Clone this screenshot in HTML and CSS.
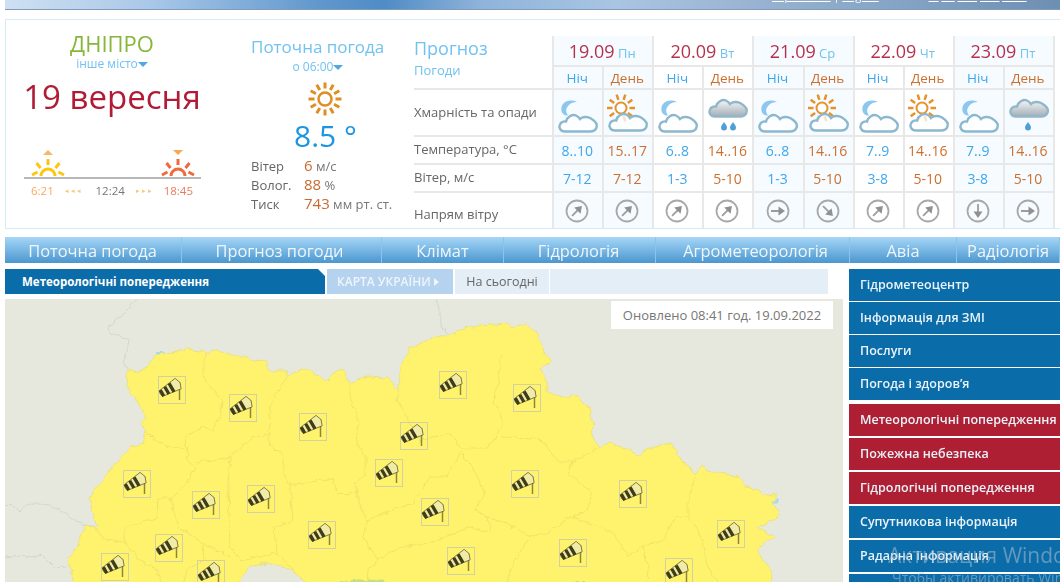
FILE: index.html
```html
<!DOCTYPE html>
<html lang="uk">
<head>
    <meta charset="UTF-8">
    <meta name="viewport" content="width=device-width, initial-scale=1.0">
    <title>Погода</title>
    <link rel="stylesheet" href="styles.css">
</head>
<body>
    <svg class="defs" width="0" height="0">
        <defs>
            <linearGradient id="rainFill" x1="0" y1="0" x2="0" y2="1">
                <stop offset="0" stop-color="#f4f6f7"/>
                <stop offset="1" stop-color="#a3aeb6"/>
            </linearGradient>
            <filter id="rough" x="0" y="0" width="100%" height="100%" color-interpolation-filters="sRGB">
                <feTurbulence type="fractalNoise" baseFrequency="0.14" numOctaves="2" seed="4"/>
                <feDisplacementMap in="SourceGraphic" scale="6" xChannelSelector="R" yChannelSelector="G"/>
            </filter>
            <path id="cloudShape" d="M12 41.5C7 41.5 5.500 37 7 34.500C8 32 11 31 13 31.500C14 27 19 24 23 25.500C25 26.500 26 27.500 27 29C29 27 34 26 38 28.500C42 31 45 34 43.500 37.500C42.500 40.500 39 41.500 37 41.500Z"/>
            <g id="sunRays" class="rays">
                <line x1="-14" x2="14" y1="0" y2="0"/>
                <line x1="-14" x2="14" y1="0" y2="0" transform="rotate(36)"/>
                <line x1="-14" x2="14" y1="0" y2="0" transform="rotate(72)"/>
                <line x1="-14" x2="14" y1="0" y2="0" transform="rotate(108)"/>
                <line x1="-14" x2="14" y1="0" y2="0" transform="rotate(144)"/>
            </g>
            <symbol id="moonCloud" viewBox="0 0 50 45">
                <path class="moon" d="M24 12C15 8 7 13 8.500 21C9 24 12 26 15 25.500C12.500 22 12.500 19 15 16C17 13.500 20 12 24 12Z"/>
                <use href="#cloudShape" class="cloud"/>
            </symbol>
            <symbol id="sunCloud" viewBox="0 0 50 45">
                <g transform="translate(18 18)">
                    <use href="#sunRays"/>
                    <circle class="sun-core" r="5.500"/>
                </g>
                <use href="#cloudShape" class="cloud" transform="translate(0 -1)"/>
            </symbol>
            <symbol id="rainTwo" viewBox="0 0 50 45">
                <use href="#cloudShape" class="rain-cloud" transform="translate(0 -15)"/>
                <path class="drop" d="M21 32c2 3 3 4 3 5.500a3 3 0 0 1-6 0c0-1.500 1-2.500 3-5.500Z"/>
                <path class="drop" d="M30 32c2 3 3 4 3 5.500a3 3 0 0 1-6 0c0-1.500 1-2.500 3-5.500Z"/>
            </symbol>
            <symbol id="rainOne" viewBox="0 0 50 45">
                <use href="#cloudShape" class="rain-cloud" transform="translate(0 -15)"/>
                <path class="drop" d="M24 32c2 3 3 4 3 5.500a3 3 0 0 1-6 0c0-1.500 1-2.500 3-5.500Z"/>
            </symbol>
            <symbol id="windDir" viewBox="0 0 26 26">
                <circle class="dir-ring" cx="13" cy="13" r="10.500"/>
                <path class="dir-shaft" d="M13 20V10"/>
                <path class="dir-head" d="M8.500 12.500 13 6l4.500 6.500Z"/>
            </symbol>
            <g id="windPin">
                <rect class="pin-box" x="0.500" y="0.500" width="27" height="27"/>
                <line class="pin-pole" x1="21.500" y1="6" x2="21.500" y2="24"/>
                <g transform="translate(12.500 12) rotate(-30) scale(1.100)">
                    <path class="sock-light" d="M-10 -3Q-11.500 0 -10 3L8 5.500 10 0 8 -5.500Z"/>
                    <path class="sock-dark" d="M-10.500 -3H-7.500V3.300H-10.500ZM-5.500 -3.600H-2.500V4H-5.500ZM-0.500 -4.300H2.500V4.700H-0.500Z"/>
                </g>
            </g>
        </defs>
    </svg>

    <div class="page">
        <div class="banner">
            <div class="langs"><a>Українська</a> <span>|</span> <a>English</a></div>
            <div class="top-tools"><a>__</a><a>ХА</a><a>____</a><a>____</a><a>_____</a></div>
        </div>

        <div class="panel">
            <div class="city-col">
                <div class="city-name">ДНІПРО</div>
                <div class="city-other">інше місто<i class="caret"></i></div>
                <div class="today">19 вересня</div>
                <div class="sun-line">
                    <div class="sun-mark">
                        <i class="tri-up"></i>
                        <svg width="36" height="20" viewBox="0 0 36 20">
                            <g class="rise-sun">
                                <path d="M11 19a7 7 0 0 1 14 0"/>
                                <path d="M18 8V2M10.500 11 6.500 6M25.500 11 29.500 6M7.500 15 2 18M28.500 15 34 18"/>
                            </g>
                        </svg>
                    </div>
                    <div class="sun-mark">
                        <i class="tri-down"></i>
                        <svg width="36" height="20" viewBox="0 0 36 20">
                            <g class="set-sun">
                                <path d="M11 19a7 7 0 0 1 14 0"/>
                                <path d="M18 8V2M10.500 11 6.500 6M25.500 11 29.500 6M7.500 15 2 18M28.500 15 34 18"/>
                            </g>
                        </svg>
                    </div>
                </div>
                <div class="sun-times">
                    <span class="t-rise">6:21</span>
                    <span class="t-arrows">◂ ◂ ◂</span>
                    <span class="t-noon">12:24</span>
                    <span class="t-arrows">▸ ▸ ▸</span>
                    <span class="t-set">18:45</span>
                </div>
            </div>

            <div class="now-col">
                <div class="now-title">Поточна погода</div>
                <div class="now-time">о 06:00<i class="caret"></i></div>
                <svg class="now-icon" width="36" height="36" viewBox="-18 -18 36 36">
                    <g class="big-rays">
                        <line x1="-16.500" x2="16.500" y1="0" y2="0"/>
                        <line x1="-16.500" x2="16.500" y1="0" y2="0" transform="rotate(30)"/>
                        <line x1="-16.500" x2="16.500" y1="0" y2="0" transform="rotate(60)"/>
                        <line x1="-16.500" x2="16.500" y1="0" y2="0" transform="rotate(90)"/>
                        <line x1="-16.500" x2="16.500" y1="0" y2="0" transform="rotate(120)"/>
                        <line x1="-16.500" x2="16.500" y1="0" y2="0" transform="rotate(150)"/>
                    </g>
                    <circle class="sun-core big" r="6.500"/>
                </svg>
                <div class="now-temp">8.5 °</div>
                <div class="now-row"><span class="now-label">Вітер</span><span class="now-val">6</span> м/с</div>
                <div class="now-row"><span class="now-label">Волог.</span><span class="now-val">88</span> %</div>
                <div class="now-row"><span class="now-label">Тиск</span><span class="now-val">743</span> мм рт. ст.</div>
            </div>

            <table class="forecast">
                <colgroup>
                    <col class="col-label">
                    <col class="pale"><col class="pale">
                    <col class="plain"><col class="plain">
                    <col class="pale"><col class="pale">
                    <col class="plain"><col class="plain">
                    <col class="pale"><col class="pale">
                </colgroup>
                <tr class="row-date">
                    <th class="no-line fc-title"><div class="fc-big">Прогноз</div><div class="fc-small">Погоди</div></th>
                    <td colspan="2"><b>19.09</b> <span>Пн</span></td>
                    <td colspan="2"><b>20.09</b> <span>Вт</span></td>
                    <td colspan="2"><b>21.09</b> <span>Ср</span></td>
                    <td colspan="2"><b>22.09</b> <span>Чт</span></td>
                    <td colspan="2"><b>23.09</b> <span>Пт</span></td>
                </tr>
                <tr class="row-part">
                    <th class="no-line"></th>
                    <td class="night">Ніч</td><td class="day">День</td>
                    <td class="night">Ніч</td><td class="day">День</td>
                    <td class="night">Ніч</td><td class="day">День</td>
                    <td class="night">Ніч</td><td class="day">День</td>
                    <td class="night">Ніч</td><td class="day">День</td>
                </tr>
                <tr class="row-icon">
                    <th>Хмарність та опади</th>
                    <td><svg class="wx"><use href="#moonCloud"/></svg></td>
                    <td><svg class="wx"><use href="#sunCloud"/></svg></td>
                    <td><svg class="wx"><use href="#moonCloud"/></svg></td>
                    <td><svg class="wx"><use href="#rainTwo"/></svg></td>
                    <td><svg class="wx"><use href="#moonCloud"/></svg></td>
                    <td><svg class="wx"><use href="#sunCloud"/></svg></td>
                    <td><svg class="wx"><use href="#moonCloud"/></svg></td>
                    <td><svg class="wx"><use href="#sunCloud"/></svg></td>
                    <td><svg class="wx"><use href="#moonCloud"/></svg></td>
                    <td><svg class="wx"><use href="#rainOne"/></svg></td>
                </tr>
                <tr class="row-num">
                    <th>Температура, °C</th>
                    <td class="night">8..10</td><td class="day">15..17</td>
                    <td class="night">6..8</td><td class="day">14..16</td>
                    <td class="night">6..8</td><td class="day">14..16</td>
                    <td class="night">7..9</td><td class="day">14..16</td>
                    <td class="night">7..9</td><td class="day">14..16</td>
                </tr>
                <tr class="row-num">
                    <th>Вітер, м/с</th>
                    <td class="night">7-12</td><td class="day">7-12</td>
                    <td class="night">1-3</td><td class="day">5-10</td>
                    <td class="night">1-3</td><td class="day">5-10</td>
                    <td class="night">3-8</td><td class="day">5-10</td>
                    <td class="night">3-8</td><td class="day">5-10</td>
                </tr>
                <tr class="row-dir">
                    <th>Напрям вітру</th>
                    <td><svg class="dir ne"><use href="#windDir"/></svg></td>
                    <td><svg class="dir ne"><use href="#windDir"/></svg></td>
                    <td><svg class="dir ne"><use href="#windDir"/></svg></td>
                    <td><svg class="dir ne"><use href="#windDir"/></svg></td>
                    <td><svg class="dir e"><use href="#windDir"/></svg></td>
                    <td><svg class="dir se"><use href="#windDir"/></svg></td>
                    <td><svg class="dir ne"><use href="#windDir"/></svg></td>
                    <td><svg class="dir ne"><use href="#windDir"/></svg></td>
                    <td><svg class="dir s"><use href="#windDir"/></svg></td>
                    <td><svg class="dir e"><use href="#windDir"/></svg></td>
                </tr>
            </table>
        </div>

        <div class="nav">
            <a class="n1">Поточна погода</a>
            <a class="n2">Прогноз погоди</a>
            <a class="n3">Клімат</a>
            <a class="n4">Гідрологія</a>
            <a class="n5">Агрометеорологія</a>
            <a class="n6">Авіа</a>
            <a class="n7">Радіологія</a>
        </div>

        <div class="main">
            <div class="content">
                <div class="subtabs">
                    <div class="tab-title">Метеорологічні попередження</div>
                    <div class="tab-map">КАРТА УКРАЇНИ<i class="tab-arrow"></i></div>
                    <div class="tab-today">На сьогодні</div>
                    <div class="tab-rest"></div>
                </div>
                <div class="map">
                    <div class="updated">Оновлено 08:41 год. 19.09.2022</div>
                    <svg class="map-svg" width="838" height="283" viewBox="5 299 838 283">
                        <g class="border-grey" filter="url(#rough)">
                            <polyline points="137,299 129,308 109,327 111,333 129,340 128,345 123,363 128,370"/>
                            <polyline points="437,299 441,312 441,327 454,337"/>
                            <polyline points="5,505 13,506 20,512 30,503 50,505 60,510 70,518 80,523 93,527"/>
                            <polyline points="5,557 22,555 32,557 42,555 55,568 68,567"/>
                        </g>
                        <g filter="url(#rough)">
                            <polygon class="ukraine" points="128,370 138,372 146,368 155,355 172,352 187,349 207,352 213,350 237,355 255,361 267,362 269,371 287,371 288,376 293,372 307,368 313,373 328,380 333,373 343,369 350,383 367,377 388,378 398,391 400,376 402,363 411,348 432,338 450,334 471,327 490,325 503,323 511,327 525,323 538,335 545,353 552,362 540,368 547,380 547,392 563,397 578,395 582,403 590,407 593,427 592,437 600,447 610,443 623,446 638,455 647,449 672,443 678,455 695,475 702,465 707,471 720,473 740,478 745,485 758,490 763,496 778,493 773,503 779,513 778,517 758,528 775,537 763,543 758,553 772,572 770,590 313,590 293,570 267,563 248,567 232,590 77,590 68,560 77,547 85,526 97,528 89,498 115,463 132,447 143,443 146,432 140,420 146,418 140,407 127,387"/>
                            <path class="water" d="M157 352h7l-3 2h-4ZM777 497l2 3-1 4-3 1-1-3Z"/>
                            <path class="green" d="M338 590l2-9 9 1 4-2 14 1 12-2 6 2 9 9ZM570 590l5-8 9 0 7 8Z"/>
                            <g class="border-yellow">
                                <polyline points="207,352 203,364 203,377 212,388 222,400 220,418 213,430 203,427 195,431 185,438 188,460 195,468 183,487 170,498 178,527 203,543 230,557"/>
                                <polyline points="146,432 158,442 170,447 185,448"/>
                                <polyline points="287,377 278,390 270,407 269,443 283,457 283,473 290,485 333,478 338,495 357,492"/>
                                <polyline points="269,435 253,438 240,448 230,457 213,460 197,462"/>
                                <polyline points="230,457 228,487 230,547 240,560 277,553 275,527 293,520 290,485"/>
                                <polyline points="170,498 158,498 157,518 125,527 125,543 140,560 157,570 163,590"/>
                                <polyline points="97,528 103,540 125,542"/>
                                <polyline points="203,543 204,560 187,570 182,590"/>
                                <polyline points="350,383 350,397 358,417 357,445 365,455 365,473 355,485 360,507 367,520 363,537 378,560 368,570 367,590"/>
                                <polyline points="367,520 393,510 413,503 430,477 447,477 462,450 450,433 430,438 420,442 410,423 397,400 398,391"/>
                                <polyline points="277,553 293,570"/>
                                <polyline points="378,560 400,547 430,543 470,527 490,532 488,518"/>
                                <polyline points="502,353 498,383 493,403 502,415 502,427 487,448 462,448"/>
                                <polyline points="502,437 533,438 543,442 558,462 572,462 600,448"/>
                                <polyline points="462,455 472,465 485,493 475,510 488,518 507,523 530,537 548,532 563,522 573,517 587,510 592,493 568,472 572,462"/>
                                <polyline points="573,517 613,532 627,557 643,547 663,540 675,518 688,517 688,500 695,477"/>
                                <polyline points="688,517 703,540 707,567 723,590"/>
                                <polyline points="643,547 648,567 647,590"/>
                                <polyline points="530,537 515,560 503,590"/>
                            </g>
                        </g>
                        <use href="#windPin" x="158" y="376"/>
                        <use href="#windPin" x="229" y="394"/>
                        <use href="#windPin" x="299" y="413"/>
                        <use href="#windPin" x="400" y="422"/>
                        <use href="#windPin" x="375" y="459"/>
                        <use href="#windPin" x="123" y="470"/>
                        <use href="#windPin" x="192" y="491"/>
                        <use href="#windPin" x="247" y="485"/>
                        <use href="#windPin" x="308" y="521"/>
                        <use href="#windPin" x="155" y="534"/>
                        <use href="#windPin" x="101" y="553"/>
                        <use href="#windPin" x="197" y="560"/>
                        <use href="#windPin" x="439" y="371"/>
                        <use href="#windPin" x="513" y="384"/>
                        <use href="#windPin" x="511" y="470"/>
                        <use href="#windPin" x="619" y="480"/>
                        <use href="#windPin" x="717" y="520"/>
                        <use href="#windPin" x="421" y="498"/>
                        <use href="#windPin" x="447" y="547"/>
                        <use href="#windPin" x="559" y="539"/>
                        <use href="#windPin" x="665" y="558"/>
                    </svg>
                </div>
            </div>

            <div class="side">
                <div class="side-group">
                    <a>Гідрометеоцентр</a>
                    <a>Інформація для ЗМІ</a>
                    <a>Послуги</a>
                    <a>Погода і здоров’я</a>
                </div>
                <div class="side-group red">
                    <a>Метеорологічні попередження</a>
                    <a>Пожежна небезпека</a>
                    <a>Гідрологічні попередження</a>
                </div>
                <div class="side-group lower">
                    <a>Супутникова інформація</a>
                    <a>Радарна інформація</a>
                    <a></a>
                </div>
            </div>
        </div>
    </div>

    <div class="watermark">
        <div class="wm-big">Активация Windows</div>
        <div class="wm-small">Чтобы активировать Windows</div>
    </div>
</body>
</html>
```

FILE: styles.css
```css
html, body {
    margin: 0;
    height: 100%;
    overflow: hidden;
    background: white;
}

body {
    font-family: "Open Sans", "Noto Sans", sans-serif;
    color: #666;
    position: relative;
}

.defs {
    position: absolute;
}

.page {
    width: 1100px;
    margin-left: 5px;
    filter: blur(0.55px);
}

/* top banner, cut by the window */
.banner {
    width: 1055px;
    height: 10px;
    box-sizing: border-box;
    border-bottom: 1px solid #7f9cba;
    background: linear-gradient(90deg, #cfe0f2 0%, #a9c7e8 14%, #5f97cd 30%, #4f8cc6 36%, #8fb3da 45%, #a9c5e2 58%, #9db7d4 68%, #85a3c4 85%, #6d8fb2 100%);
    display: flex;
    overflow: hidden;
}

.langs {
    margin: -12px 0 0 767px;
    font-size: 11px;
    color: white;
    line-height: 16px;
    white-space: nowrap;
}

.langs a {
    text-decoration: underline;
}

.top-tools {
    margin: -12px 0 0 50px;
    font-size: 11px;
    line-height: 16px;
    color: white;
    display: flex;
    gap: 3px;
}

.top-tools a {
    text-decoration: underline;
}

/* weather panel */
.panel {
    margin-top: 9px;
    height: 210px;
    box-sizing: border-box;
    border: 1px solid #d4ecfa;
    border-right: none;
    display: flex;
}

.city-col {
    width: 212px;
    flex: none;
    padding-top: 10px;
    text-align: center;
}

.city-name {
    font-size: 22px;
    line-height: 26px;
    color: #86b73a;
}

.city-other {
    font-size: 12px;
    line-height: 15px;
    color: #71c2f0;
}

.caret {
    display: inline-block;
    border: 5px solid transparent;
    border-top: 5px solid #4fa9de;
    border-bottom: none;
    vertical-align: middle;
}

.today {
    font-size: 33px;
    line-height: 44px;
    margin-top: 4px;
    color: #b01c36;
}

.sun-line {
    margin: 31px 0 0 18px;
    width: 177px;
    box-sizing: border-box;
    border-bottom: 2px solid #b8b8b8;
    display: flex;
    justify-content: space-between;
    padding: 0 5px 0 6px;
}

.sun-mark {
    width: 36px;
    display: flex;
    flex-direction: column;
    align-items: center;
    gap: 2px;
}

.sun-mark svg {
    display: block;
}

.tri-up {
    border: 5px solid transparent;
    border-top: none;
    border-bottom: 5px solid #f7b56a;
}

.tri-down {
    border: 5px solid transparent;
    border-bottom: none;
    border-top: 5px solid #f7a94e;
}

.rise-sun path, .set-sun path {
    fill: none;
    stroke-width: 3;
}

.rise-sun path {
    stroke: #ffc611;
}

.set-sun path {
    stroke: #ef6a3c;
}

.sun-times {
    margin: 3px 0 0 18px;
    width: 177px;
    display: flex;
    justify-content: space-between;
    padding: 0 8px 0 7px;
    box-sizing: border-box;
    font-size: 11.5px;
    line-height: 17px;
}

.t-rise {
    color: #f9a95a;
}

.t-noon {
    color: #777;
    margin-left: 3px;
}

.t-set {
    color: #f0795a;
}

.t-arrows {
    font-size: 7px;
    color: #f9c77f;
}

.now-col {
    width: 163px;
    flex: none;
    margin-left: 33px;
    padding-top: 15px;
}

.now-title {
    font-size: 17px;
    line-height: 24px;
    color: #71c2f0;
    white-space: nowrap;
}

.now-time {
    font-size: 12px;
    line-height: 16px;
    color: #71c2f0;
    text-align: center;
    width: 134px;
}

.now-icon {
    display: block;
    margin: 6px 0 0 56px;
}

.big-rays line {
    stroke: #de8f24;
    stroke-width: 3;
    stroke-dasharray: 6 21 6;
}

.now-temp {
    font-size: 30px;
    line-height: 38px;
    color: #1c96e0;
    margin-left: 43px;
    margin-bottom: 2px;
    white-space: nowrap;
}

.now-row {
    height: 19px;
    font-size: 13px;
    line-height: 19px;
    color: #777;
    white-space: nowrap;
}

.now-label {
    display: inline-block;
    width: 53px;
    color: #666;
    font-size: 13px;
}

.now-val {
    color: #c96a32;
    font-size: 15px;
    line-height: 1;
}

/* forecast table */
.forecast {
    margin: 16px 0 0 0;
    width: 641px;
    height: 191px;
    flex: none;
    table-layout: fixed;
    border-collapse: collapse;
    font-size: 13.5px;
}

.col-label {
    width: 139px;
}

.forecast col.pale, .forecast col.plain {
    width: 50px;
}

.forecast col.pale {
    background: #f6fbff;
}

.forecast th {
    text-align: left;
    font-weight: normal;
    color: #666;
    font-size: 13px;
    padding: 0 0 2px;
    border-top: 2px solid #e8e8e8;
    white-space: nowrap;
    background: white;
}

.forecast th.no-line {
    border-top: none;
}

.forecast td {
    border: 2px solid #e8e8e8;
    text-align: center;
    padding: 0 2px 0 0;
    white-space: nowrap;
}

.row-date {
    height: 30px;
}

.forecast .row-date td {
    border-top: none;
    color: #71c2f0;
    font-size: 13px;
}

.row-date b {
    font-weight: normal;
    font-size: 18px;
    color: #b5314f;
}

.fc-title {
    vertical-align: top;
}

.fc-big {
    font-size: 18px;
    line-height: 26px;
    color: #71c2f0;
    margin-top: -1px;
}

.fc-small {
    font-size: 13px;
    line-height: 15px;
    color: #71c2f0;
    margin-top: 2px;
    position: relative;
    margin-bottom: -30px;
}

.row-part {
    height: 23px;
    font-size: 13.5px;
}

.row-icon {
    height: 46px;
}

.row-num {
    height: 28px;
    font-size: 14px;
}

.row-dir {
    height: 36px;
}

.forecast .row-dir td {
    border-bottom: none;
}

.forecast .row-dir th {
    padding-top: 8px;
}

.night {
    color: #3ea6ec;
}

.day {
    color: #cd6f2c;
}

.wx {
    display: block;
    width: 50px;
    height: 45px;
    margin: 0 -1px;
}

.cloud {
    fill: white;
    fill-opacity: 0.75;
    stroke: #8cb8cf;
    stroke-width: 2.4;
}

.moon {
    fill: #8dc7ef;
}

.rays line {
    stroke: #e6922a;
    stroke-width: 2.5;
    stroke-dasharray: 5.500 17 5.500;
}

.sun-core {
    fill: white;
    stroke: #e6922a;
    stroke-width: 2;
}

.sun-core.big {
    stroke: #de8f24;
    stroke-width: 2.5;
}

.rain-cloud {
    fill: url(#rainFill);
    stroke: #93b7ca;
    stroke-width: 2.4;
}

.drop {
    fill: #4e9fd6;
}

.dir {
    display: block;
    width: 26px;
    height: 26px;
    margin: 0 auto;
}

.dir.ne { transform: rotate(45deg); }
.dir.e { transform: rotate(90deg); }
.dir.se { transform: rotate(135deg); }
.dir.s { transform: rotate(180deg); }

.dir-ring {
    fill: none;
    stroke: #a8a8a8;
    stroke-width: 1.800;
}

.dir-shaft {
    fill: none;
    stroke: #9c9c9c;
    stroke-width: 1.800;
}

.dir-head {
    fill: #909090;
}

/* main menu */
.nav {
    margin-top: 8px;
    height: 26px;
    display: flex;
    background: linear-gradient(#a6d6f7, #4b97cf);
}

.nav a {
    box-sizing: border-box;
    flex: none;
    border-right: 1px solid #8cc3ea;
    color: #eef6fc;
    font-size: 16.4px;
    line-height: 28px;
    text-align: center;
    white-space: nowrap;
}

.n1 { width: 177px; padding-right: 1px; }
.n2 { width: 200px; padding-right: 4px; }
.n3 { width: 122px; }
.n4 { width: 152px; padding-right: 2px; }
.n5 { width: 194px; padding-left: 6px; }
.n6 { width: 107px; }
.n7 { width: 103px; border-right: none; }

.main {
    margin-top: 6px;
    display: flex;
}

.content {
    width: 838px;
    flex: none;
}

.subtabs {
    height: 25px;
    width: 823px;
    display: flex;
    gap: 2px;
    font-size: 12.5px;
    line-height: 25px;
}

.tab-title {
    width: 320px;
    box-sizing: border-box;
    padding-left: 17px;
    background: #0a6ca8;
    color: white;
    font-weight: 700;
    font-size: 11.5px;
    clip-path: polygon(0 0, 313px 0, 100% 7px, 100% 100%, 0 100%);
}

.tab-map {
    width: 126px;
    box-sizing: border-box;
    padding-left: 10px;
    background: #b5d2ee;
    color: #eef5fb;
    font-size: 12px;
    font-weight: 600;
    white-space: nowrap;
}

.tab-arrow {
    display: inline-block;
    margin-left: 3px;
    border: 4px solid transparent;
    border-left: 5px solid #eef5fb;
    border-right: none;
}

.tab-today {
    width: 94px;
    box-sizing: border-box;
    text-align: center;
    background: #e4eef7;
    color: #666;
}

.tab-rest {
    flex: 1;
    margin-left: -1px;
    background: #e4eef7;
}

.map {
    position: relative;
    margin-top: 5px;
    height: 283px;
    background: #e6e8de;
    overflow: hidden;
}

.map-svg {
    display: block;
}

.updated {
    position: absolute;
    top: 2px;
    left: 606px;
    width: 222px;
    height: 28px;
    background: white;
    color: #777;
    font-size: 13px;
    line-height: 28px;
    text-align: center;
    white-space: nowrap;
}

.ukraine {
    fill: #fff36d;
    stroke: #ebe27c;
    stroke-width: 1;
}

.border-grey polyline {
    fill: none;
    stroke: #d3d6ca;
    stroke-width: 1;
}

.border-yellow polyline {
    fill: none;
    stroke: #efe367;
    stroke-width: 1;
}

.water {
    fill: #a6dbe8;
}

.green {
    fill: #c5e07c;
}

.pin-box {
    fill: none;
    stroke: #d2d1a2;
    stroke-width: 1;
}

.pin-pole {
    stroke: #8a8640;
    stroke-width: 1.500;
}

.sock-light {
    fill: #f1eba8;
    stroke: #57542a;
    stroke-width: 0.600;
}

.sock-dark {
    fill: #3f3c18;
}

/* side menu */
.side {
    margin-left: 6px;
    width: 240px;
    flex: none;
    display: flex;
    flex-direction: column;
    gap: 4px;
}

.side-group {
    display: flex;
    flex-direction: column;
    gap: 1px;
}

.side-group a {
    display: block;
    height: 32px;
    box-sizing: border-box;
    padding-left: 11px;
    background: #0a6ca8;
    color: #eaf3fa;
    font-size: 12.5px;
    font-weight: 600;
    line-height: 31px;
    white-space: nowrap;
}

.side-group.red, .side-group.lower {
    gap: 2px;
}

.side-group.lower {
    margin-top: -2px;
}

.side-group.red a {
    background: #ae1f33;
}

/* os watermark over the page */
.watermark {
    position: absolute;
    left: 888px;
    top: 541px;
    color: rgba(175, 190, 205, 0.55);
    white-space: nowrap;
}

.wm-big {
    font-size: 21px;
    line-height: 28px;
}

.wm-small {
    font-size: 14px;
    line-height: 18px;
    margin-left: 4px;
}
```
